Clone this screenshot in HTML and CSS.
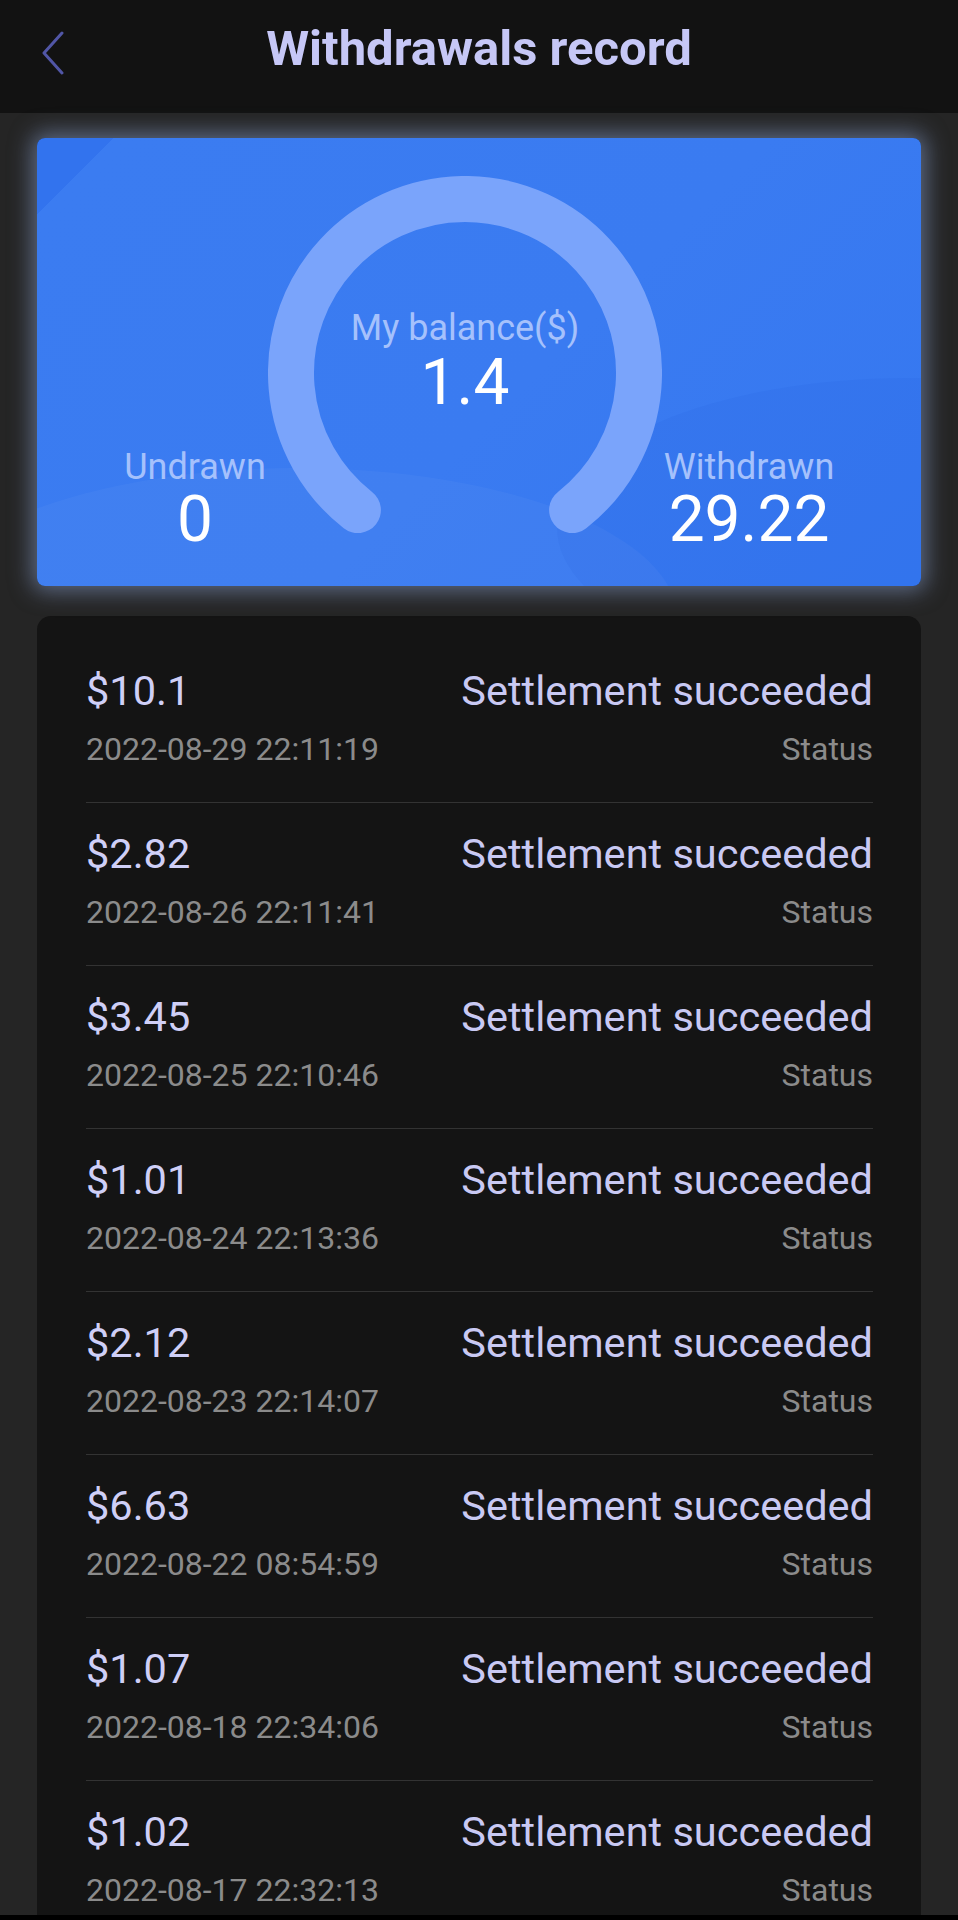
FILE: index.html
```html
<!DOCTYPE html>
<html lang="en">
<head>
    <meta charset="UTF-8">
    <meta name="viewport" content="width=device-width, initial-scale=1.0">
    <title>Withdrawals record</title>
    <link rel="stylesheet" href="styles.css">
</head>
<body>

    <header class="top-bar">
        <a class="back" href="#">
            <svg width="24" height="44" viewBox="0 0 24 44">
                <polyline points="21,2 3,22 21,42" fill="none" stroke="#5156a6" stroke-width="3" stroke-linecap="round" stroke-linejoin="round"/>
            </svg>
        </a>
        <h1>Withdrawals record</h1>
    </header>

    <section class="balance-card">
        <div class="stat">
            <div class="stat-label">Undrawn</div>
            <div class="stat-value">0</div>
        </div>
        <div class="gauge">
            <svg class="gauge-ring" width="394" height="360" viewBox="0 0 394 360">
                <path d="M 89.9 334.1 A 174 174 0 1 1 304.1 334.1" fill="none" stroke="#7aa4fb" stroke-width="46" stroke-linecap="round"/>
            </svg>
            <div class="gauge-text">
                <div class="gauge-label">My balance($)</div>
                <div class="gauge-value">1.4</div>
            </div>
        </div>
        <div class="stat">
            <div class="stat-label">Withdrawn</div>
            <div class="stat-value">29.22</div>
        </div>
    </section>

    <section class="records">
        <div class="record">
            <div class="line"><span class="amount">$10.1</span><span class="state">Settlement succeeded</span></div>
            <div class="line sub"><span>2022-08-29 22:11:19</span><span>Status</span></div>
        </div>
        <div class="record">
            <div class="line"><span class="amount">$2.82</span><span class="state">Settlement succeeded</span></div>
            <div class="line sub"><span>2022-08-26 22:11:41</span><span>Status</span></div>
        </div>
        <div class="record">
            <div class="line"><span class="amount">$3.45</span><span class="state">Settlement succeeded</span></div>
            <div class="line sub"><span>2022-08-25 22:10:46</span><span>Status</span></div>
        </div>
        <div class="record">
            <div class="line"><span class="amount">$1.01</span><span class="state">Settlement succeeded</span></div>
            <div class="line sub"><span>2022-08-24 22:13:36</span><span>Status</span></div>
        </div>
        <div class="record">
            <div class="line"><span class="amount">$2.12</span><span class="state">Settlement succeeded</span></div>
            <div class="line sub"><span>2022-08-23 22:14:07</span><span>Status</span></div>
        </div>
        <div class="record">
            <div class="line"><span class="amount">$6.63</span><span class="state">Settlement succeeded</span></div>
            <div class="line sub"><span>2022-08-22 08:54:59</span><span>Status</span></div>
        </div>
        <div class="record">
            <div class="line"><span class="amount">$1.07</span><span class="state">Settlement succeeded</span></div>
            <div class="line sub"><span>2022-08-18 22:34:06</span><span>Status</span></div>
        </div>
        <div class="record">
            <div class="line"><span class="amount">$1.02</span><span class="state">Settlement succeeded</span></div>
            <div class="line sub"><span>2022-08-17 22:32:13</span><span>Status</span></div>
        </div>
    </section>

    <div class="nav-strip"></div>

</body>
</html>
```

FILE: styles.css
```css
body {
    margin: 0;
    background-color: #252525;
    font-family: Roboto, "Liberation Sans", Arial, sans-serif;
    overflow: hidden;
}

.top-bar {
    position: relative;
    height: 113px;
    box-sizing: border-box;
    padding-top: 25px;
    background-color: #121212;
    text-align: center;
}

.top-bar h1 {
    margin: 0;
    font-size: 49px;
    line-height: 48px;
    font-weight: bold;
    color: #c6c7f6;
}

.back {
    position: absolute;
    left: 41px;
    top: 31px;
    display: block;
}

.balance-card {
    position: relative;
    overflow: hidden;
    margin: 25px 37px 0;
    padding: 38px 0 34px;
    display: grid;
    grid-template-columns: 316px 224px 1fr;
    border-radius: 8px;
    background: linear-gradient(135deg, #3273ee 0, #3273ee 54px, #3b7cf1 54px, #3a7bf1 55%, #3577f0 100%);
    box-shadow: 0 0 22px 5px rgba(150, 175, 230, 0.5);
}

.balance-card::before {
    content: "";
    position: absolute;
    left: -120px;
    top: 330px;
    width: 760px;
    height: 300px;
    border-radius: 50%;
    background-color: rgba(255, 255, 255, 0.035);
}

.balance-card::after {
    content: "";
    position: absolute;
    left: 520px;
    top: 240px;
    width: 700px;
    height: 300px;
    border-radius: 50%;
    background-color: rgba(20, 60, 200, 0.06);
}

.gauge {
    position: relative;
    z-index: 1;
    justify-self: center;
    width: 394px;
    height: 360px;
    margin-bottom: 16px;
    display: grid;
}

.gauge-ring,
.gauge-text {
    grid-area: 1 / 1;
}

.gauge-text {
    padding-top: 134px;
    text-align: center;
}

.gauge-label,
.stat-label {
    font-size: 36px;
    line-height: 36px;
    color: #a5c1fc;
}

.gauge-value,
.stat-value {
    margin-top: 5px;
    font-size: 64px;
    line-height: 64px;
    color: #ffffff;
}

.stat {
    position: relative;
    z-index: 1;
    align-self: end;
    text-align: center;
}

.stat .stat-label {
    margin-bottom: -2px;
}

.stat .stat-value {
    margin-top: 5px;
}

.records {
    margin: 30px 37px 0;
    padding: 24px 48px 0 49px;
    background-color: #141414;
    border-radius: 14px;
}

.record {
    padding: 27px 0 35px;
    border-bottom: 1px solid #333333;
}

.line {
    display: flex;
    justify-content: space-between;
    align-items: baseline;
    font-size: 41.5px;
    line-height: 48px;
    color: #cfcff7;
}

.line .state {
    color: #c9c9f3;
}

.line.sub {
    margin-top: 16px;
    font-size: 32px;
    line-height: 36px;
    color: #8b8b8b;
}

.nav-strip {
    position: fixed;
    left: 0;
    right: 0;
    bottom: 0;
    height: 5px;
    background-color: #000000;
}
```
